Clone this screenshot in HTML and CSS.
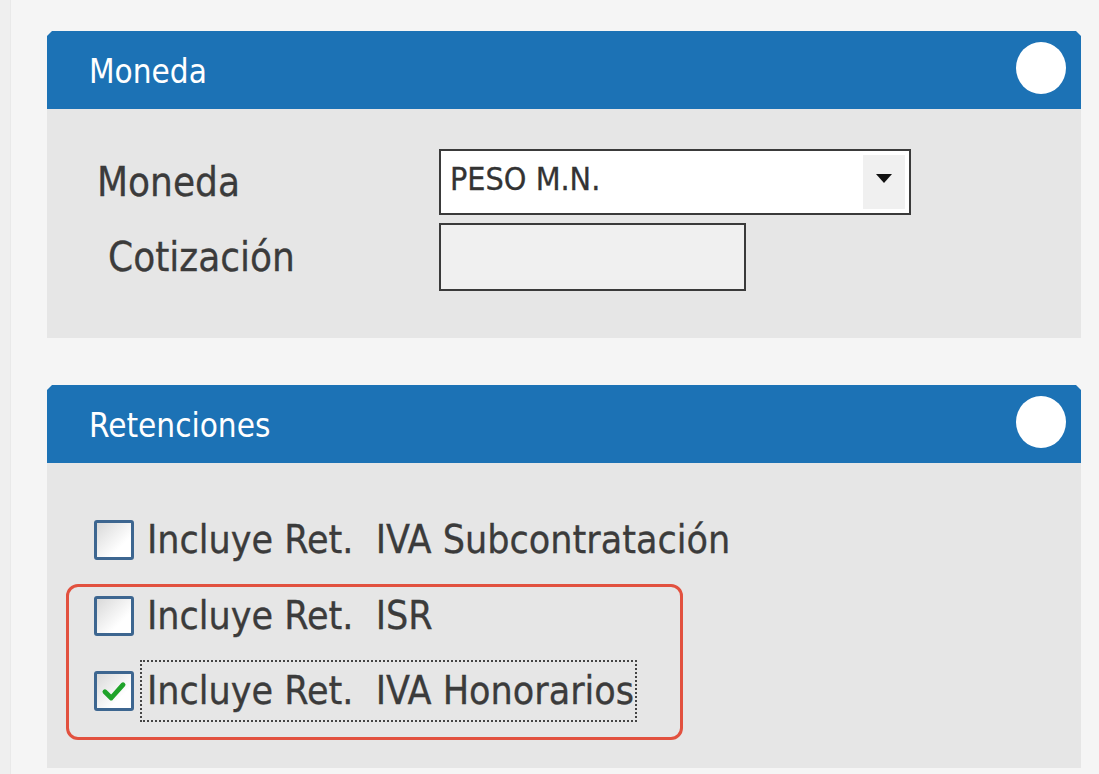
FILE: index.html
```html
<!DOCTYPE html>
<html lang="es">
<head>
<meta charset="utf-8">
<title>Moneda / Retenciones</title>
<link rel="stylesheet" href="styles.css">
</head>
<body>
<div class="page">
  <div class="strip"></div>
  <div class="content">
    <section class="panel panel-moneda">
      <header class="panel-head">
        <span class="panel-title">Moneda</span>
        <span class="dot"></span>
      </header>
      <div class="panel-body body-moneda">
        <div class="field-row">
          <span class="label">Moneda</span>
          <div class="select">
            <span class="select-text">PESO M.N.</span>
            <span class="select-btn"><span class="tri"></span></span>
          </div>
        </div>
        <div class="field-row row-cot">
          <span class="label label-cot">Cotización</span>
          <div class="input"></div>
        </div>
      </div>
    </section>

    <section class="panel panel-ret">
      <header class="panel-head">
        <span class="panel-title">Retenciones</span>
        <span class="dot"></span>
      </header>
      <div class="panel-body body-ret">
        <div class="check-row first">
          <span class="box"></span>
          <span class="check-text">Incluye Ret.  IVA Subcontratación</span>
        </div>
        <div class="highlight">
          <div class="check-row">
            <span class="box"></span>
            <span class="check-text">Incluye Ret.  ISR</span>
          </div>
          <div class="check-row third">
            <span class="box checked">
              <svg viewBox="0 0 20 20" width="28" height="28"><path d="M3.5 10.5 L8 15 L16.5 5.5" fill="none" stroke="#1fa32a" stroke-width="3.4" stroke-linecap="round" stroke-linejoin="round"/></svg>
            </span>
            <span class="check-text focus">Incluye Ret.  IVA Honorarios</span>
          </div>
        </div>
      </div>
    </section>
  </div>
</div>
</body>
</html>
```

FILE: styles.css
```css
* { box-sizing: border-box; }
html, body { margin: 0; padding: 0; }
body {
  width: 1099px;
  height: 774px;
  overflow: hidden;
  background: #f5f5f5;
  font-family: "DejaVu Sans Condensed", "DejaVu Sans", sans-serif;
  font-stretch: condensed;
  color: #3b3b3b;
}
.page { display: flex; height: 774px; }
.strip { width: 11px; background: #efefef; border-right: 1px solid #e9e9e9; }
.content { flex: 1; padding: 31px 18px 0 36px; }

.panel { width: 1034px; }
.panel-ret { margin-top: 47px; }

.panel-head {
  height: 78px;
  background: #1c72b5;
  display: flex;
  align-items: center;
  justify-content: space-between;
  padding: 0 15px 0 42px;
  clip-path: polygon(5px 0, calc(100% - 5px) 0, 100% 5px, 100% 100%, 0 100%, 0 5px);
}
.panel-title {
  color: #ffffff;
  font-size: 33px;
  margin-top: 2px;
}
.dot {
  width: 50px;
  height: 52px;
  border-radius: 50%;
  background: #ffffff;
  margin-top: -4px;
}

.panel-body { background: #e6e6e6; }
.body-moneda { height: 229px; padding: 40px 0 0 50px; }
.body-ret { height: 305px; padding: 57px 0 0 19px; }

.field-row { display: flex; align-items: center; }
.label { font-size: 40px; width: 342px; -webkit-text-stroke: 0.3px #3b3b3b; }
.label-cot { padding-left: 11px; }
.row-cot { margin-top: 8px; }

.select {
  width: 472px;
  height: 66px;
  border: 2px solid #3a3a3a;
  background: #ffffff;
  display: flex;
  align-items: center;
  justify-content: space-between;
  padding: 4px 4px 4px 9px;
}
.select-text { font-size: 32px; color: #333; margin-top: -6px; -webkit-text-stroke: 0.3px #333; }
.select-btn {
  width: 42px;
  height: 100%;
  background: #f0f0f0;
  display: flex;
  align-items: center;
  justify-content: center;
}
.tri {
  width: 0; height: 0;
  border-left: 8px solid transparent;
  border-right: 8px solid transparent;
  border-top: 9px solid #111;
  margin-top: -8px;
}
.input {
  width: 307px;
  height: 68px;
  border: 2px solid #3a3a3a;
  background: #f0f0f0;
}

.check-row { display: flex; align-items: center; height: 40px; }
.box {
  width: 40px;
  height: 40px;
  border: 3px solid #3d6690;
  border-radius: 3px;
  background: linear-gradient(135deg, #d9d9d9, #ffffff 70%);
  display: flex;
  align-items: center;
  justify-content: center;
  flex: none;
  margin-left: 28px;
}
.check-text {
  white-space: pre;
  font-size: 39px;
  margin-left: 13px;
  line-height: 40px;
  -webkit-text-stroke: 0.3px #3b3b3b;
}
.highlight {
  margin-top: 24px;
  width: 617px;
  height: 156px;
  border: 3px solid #e2513f;
  border-radius: 12px;
  padding: 9px 0 0 0;
}
.highlight .box { margin-left: 25px; }
.third { margin-top: 35px; }
.focus {
  height: 62px;
  line-height: 58px;
  border: 2px dotted #444;
  padding: 0 1px 0 5px;
  margin-left: 6px;
}
```
